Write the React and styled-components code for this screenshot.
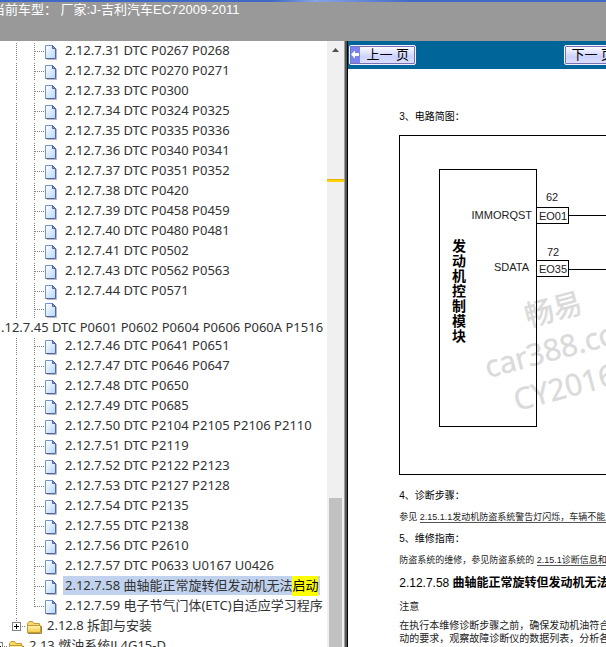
import styled, { createGlobalStyle } from "styled-components";

const GlobalStyle = createGlobalStyle`
  * {
    box-sizing: border-box;
  }

  body {
    margin: 0;
    overflow: hidden;
    background-color: white;
  }
`;

const Page = styled.div`
  display: flex;
  flex-direction: column;
  height: 100vh;
`;

const Header = styled.header`
  flex-shrink: 0;
  height: 41px;
  border-top: 2px solid #4169c8;
  border-image: linear-gradient(to right, #3f69c6 45%, #86a4e6 52%, #4169c8 68%) 1;
  background-color: #999;
  overflow: hidden;
`;

const HeaderText = styled.div`
  margin-left: -8px;
  color: white;
  font-family: "Liberation Sans", "Noto Sans CJK SC", sans-serif;
  font-size: 13px;
  line-height: 16px;
  white-space: pre;
`;

const Main = styled.main`
  display: flex;
  flex: 1;
  min-height: 0;
`;

const TreePane = styled.nav`
  width: 54%;
  flex-shrink: 0;
  overflow: hidden;
`;

const Tree = styled.ul`
  margin: 0;
  padding: 0;
  list-style: none;
  font-family: "Noto Sans", "Noto Sans CJK SC", sans-serif;
  font-size: 13px;
  line-height: 18px;
  color: #333;
  white-space: nowrap;
`;

const Row = styled.li`
  display: flex;
  height: ${(props) => (props.$wrapped ? "18px" : "20px")};
  padding-left: ${(props) => (props.$level ? "8px" : "0")};
  margin-left: ${(props) => (props.$level ? "0" : "-10px")};

  svg {
    flex-shrink: 0;
    align-self: flex-end;
  }
`;

const WrappedRow = styled.li`
  height: 17px;
  margin-left: -2px;
  line-height: 17px;
`;

const TreeLink = styled.a`
  height: 19px;
  margin-left: 1px;
  padding: 0 2px;
  color: inherit;
  text-decoration: none;
  background-color: ${(props) => (props.$selected ? "#c1d2ee" : "transparent")};
`;

const Mark = styled.mark`
  display: inline-block;
  height: 20px;
  background-color: #ff0;
  color: black;
`;

const Toggle = styled.button`
  display: flex;
  align-items: flex-end;
  padding: 0;
  border: none;
  background: none;
  cursor: pointer;
`;

const ScrollTrack = styled.div`
  display: flex;
  flex-direction: column;
  flex-shrink: 0;
  width: 17px;
  background-color: #f0f0f0;
`;

const ScrollArrow = styled.button`
  display: flex;
  justify-content: center;
  align-items: center;
  height: 17px;
  padding: 0;
  border: none;
  background: none;
`;

const FoundLine = styled.div`
  height: 3px;
  margin-top: 121px;
  background-color: #ffd400;
  border-top: 1px solid #e0b400;
`;

const Thumb = styled.div`
  flex: 1;
  margin: 316px 2px 0;
  background-color: #c1c1c1;
`;

const Splitter = styled.div`
  flex-shrink: 0;
  width: 4px;
  background: linear-gradient(to right, #a0a0a0 1px, #555 1px, #555 3px, black 3px);
`;

const DocPane = styled.section`
  flex: 1;
  min-width: 0;
  overflow: hidden;
  font-family: "Liberation Sans", "Noto Sans CJK SC", sans-serif;
  color: #222;
  white-space: nowrap;
`;

const Toolbar = styled.div`
  display: flex;
  align-items: center;
  gap: 148px;
  height: 28px;
  padding: 0 1px;
  background-color: #069;
`;

const PageButton = styled.button`
  display: flex;
  flex-shrink: 0;
  align-items: stretch;
  width: 67px;
  height: 20px;
  padding: 0;
  border: 1px solid #f4f4ff;
  outline: 1px solid #7a70b8;
  outline-offset: -2px;
  border-radius: 2px;
  background: linear-gradient(#fff, #ccd2ff 60%, #dfe2ff);
  color: black;
  font-family: "Liberation Sans", "Noto Sans CJK SC", sans-serif;
  font-size: 13px;
  line-height: 18px;
  white-space: pre;
  cursor: pointer;
`;

const ButtonLabel = styled.span`
  flex: 1;
  text-align: center;
`;

const Doc = styled.article`
  padding: 41px 0 0 51px;
`;

const SectionTitle = styled.p`
  margin: 0;
  font-size: 10px;
  line-height: 14px;
  color: black;
`;

const Diagram = styled.svg`
  display: block;
  margin: 11px 0 14px;
`;

const Paragraph = styled.p`
  margin: 8px 0 9px;
  font-size: 9px;
  line-height: 12px;
`;

const DocLink = styled.a`
  color: inherit;
  text-decoration: none;
  border-bottom: 1px solid #555;
`;

const DocHeading = styled.h2`
  margin: 0 0 9px;
  font-size: 12px;
  line-height: 16px;
  font-weight: bold;
  color: black;

  span {
    font-weight: normal;
  }
`;

const Note = styled.p`
  margin: 0 0 6px;
  font-size: 10px;
  line-height: 13px;
`;

const items = [
  "2.12.7.31 DTC P0267 P0268",
  "2.12.7.32 DTC P0270 P0271",
  "2.12.7.33 DTC P0300",
  "2.12.7.34 DTC P0324 P0325",
  "2.12.7.35 DTC P0335 P0336",
  "2.12.7.36 DTC P0340 P0341",
  "2.12.7.37 DTC P0351 P0352",
  "2.12.7.38 DTC P0420",
  "2.12.7.39 DTC P0458 P0459",
  "2.12.7.40 DTC P0480 P0481",
  "2.12.7.41 DTC P0502",
  "2.12.7.43 DTC P0562 P0563",
  "2.12.7.44 DTC P0571",
];

const itemsAfterWrap = [
  "2.12.7.46 DTC P0641 P0651",
  "2.12.7.47 DTC P0646 P0647",
  "2.12.7.48 DTC P0650",
  "2.12.7.49 DTC P0685",
  "2.12.7.50 DTC P2104 P2105 P2106 P2110",
  "2.12.7.51 DTC P2119",
  "2.12.7.52 DTC P2122 P2123",
  "2.12.7.53 DTC P2127 P2128",
  "2.12.7.54 DTC P2135",
  "2.12.7.55 DTC P2138",
  "2.12.7.56 DTC P2610",
  "2.12.7.57 DTC P0633 U0167 U0426",
];

const dots = { stroke: "#808080", strokeDasharray: "1 1" };

const Branch = ({ last }) => (
  <svg width="36" height="18" aria-hidden="true" shapeRendering="crispEdges">
    <path d="M8.5 0V18" {...dots} />
    <path d={last ? "M26.5 0V9" : "M26.5 0V18"} {...dots} />
    <path d="M27 8.5H36" {...dots} />
  </svg>
);

const PageIcon = () => (
  <svg width="18" height="18" aria-hidden="true">
    <defs>
      <linearGradient id="paper" x1="0" y1="0" x2="1" y2="1">
        <stop offset="0" stopColor="#ffffff" />
        <stop offset="1" stopColor="#b4d6fa" />
      </linearGradient>
    </defs>
    <path d="M3 16.5H12.5V6" fill="none" stroke="#b8b8c0" />
    <path d="M1.5 2.5H8.5L11.5 5.5V15.5H1.5Z" fill="url(#paper)" />
    <path d="M1.5 15.5V2.5H8.5" fill="none" stroke="#7294d8" />
    <path d="M8.5 2.5L11.5 5.5V15.5H1.5" fill="none" stroke="#55639f" />
    <path d="M8.5 2.5V5.5H11.5Z" fill="#7fa8ea" stroke="#55639f" />
  </svg>
);

const PlusIcon = () => (
  <svg width="18" height="18" aria-hidden="true" shapeRendering="crispEdges">
    <path d="M8.5 0V4M14 8.5H18" {...dots} />
    <rect x="4.5" y="4.5" width="8" height="8" fill="white" stroke="#808080" />
    <path d="M6 8.5H11M8.5 6V11" stroke="black" />
  </svg>
);

const FolderIcon = () => (
  <svg width="18" height="18" aria-hidden="true">
    <defs>
      <linearGradient id="folder" x1="0" y1="0" x2="0" y2="1">
        <stop offset="0" stopColor="#fff6b4" />
        <stop offset="1" stopColor="#f5c93c" />
      </linearGradient>
    </defs>
    <path d="M1.5 14.5V5.5L3 3.5H6.5L8 5.5H13.5V14.5Z" fill="#f7d868" stroke="#c49a32" />
    <path d="M1.5 14.5V7.5H14.5V14.5Z" fill="url(#folder)" stroke="#c49a32" />
    <path d="M2 15.5H15.5V8" fill="none" stroke="#9c8444" />
  </svg>
);

const TreeItem = ({ label }) => (
  <Row $level={1}>
    <Branch />
    <PageIcon />
    <TreeLink href="#">{label}</TreeLink>
  </Row>
);

const FolderItem = ({ label, level }) => (
  <Row $level={level}>
    <Toggle aria-label={label}>
      <PlusIcon />
    </Toggle>
    <FolderIcon />
    <TreeLink href="#">{label}</TreeLink>
  </Row>
);

const CircuitDiagram = () => (
  <Diagram width="480" height="340" role="img" aria-label="电路简图">
    <g
      fill="#dadada"
      stroke="#dadada"
      strokeWidth="0.5"
      fontFamily='"Open Sans", "Noto Sans CJK SC", sans-serif'
      fontSize="30"
    >
      <text transform="translate(129 192) rotate(-15)" fontSize="29">畅易</text>
      <text transform="translate(89 243) rotate(-15)">car388.com</text>
      <text transform="translate(118 276) rotate(-15)">CY2016</text>
    </g>
    <g fill="none" stroke="black" shapeRendering="crispEdges">
      <rect x="0.5" y="0.5" width="479" height="339" />
      <rect x="40.5" y="34.5" width="97" height="257" />
      <rect x="137.5" y="72.5" width="32" height="16" />
      <rect x="137.5" y="125.5" width="32" height="16" />
      <path d="M170 80.5H480M170 134.5H480" />
    </g>
    <g fontSize="11" fill="#222">
      <text x="133" y="84" textAnchor="end">IMMORQST</text>
      <text x="130" y="136" textAnchor="end">SDATA</text>
      <text x="153" y="66" textAnchor="middle">62</text>
      <text x="154" y="121" textAnchor="middle">72</text>
      <text x="154" y="85" textAnchor="middle">EO01</text>
      <text x="154" y="138" textAnchor="middle">EO35</text>
    </g>
    <g fontSize="14" fontWeight="bold" textAnchor="middle">
      {[..."发动机控制模块"].map((char, i) => (
        <text key={char} x="60" y={116 + i * 15}>
          {char}
        </text>
      ))}
    </g>
  </Diagram>
);

const App = () => {
  return (
    <Page>
      <GlobalStyle />
      <Header>
        <HeaderText>当前车型： 厂家:J-吉利汽车EC72009-2011</HeaderText>
      </Header>
      <Main>
        <TreePane>
          <Tree>
            {items.map((label) => (
              <TreeItem key={label} label={label} />
            ))}
            <Row $level={1} $wrapped>
              <Branch />
              <PageIcon />
            </Row>
            <WrappedRow>
              <TreeLink href="#">
                .12.7.45 DTC P0601 P0602 P0604 P0606 P060A P1516
              </TreeLink>
            </WrappedRow>
            {itemsAfterWrap.map((label) => (
              <TreeItem key={label} label={label} />
            ))}
            <Row $level={1}>
              <Branch />
              <PageIcon />
              <TreeLink href="#" $selected>
                2.12.7.58 曲轴能正常旋转但发动机无法<Mark>启动</Mark>
              </TreeLink>
            </Row>
            <Row $level={1}>
              <Branch last />
              <PageIcon />
              <TreeLink href="#">2.12.7.59 电子节气门体(ETC)自适应学习程序</TreeLink>
            </Row>
            <FolderItem level={1} label="2.12.8 拆卸与安装" />
            <FolderItem level={0} label="2.13 燃油系统JL4G15-D" />
          </Tree>
        </TreePane>
        <ScrollTrack>
          <ScrollArrow aria-label="向上滚动">
            <svg width="7" height="4">
              <path d="M3.5 0L7 4H0Z" fill="#505050" />
            </svg>
          </ScrollArrow>
          <FoundLine />
          <Thumb />
        </ScrollTrack>
        <Splitter />
        <DocPane>
          <Toolbar>
            <PageButton>
              <svg width="10" height="18" aria-hidden="true">
                <rect width="10" height="18" fill="#7b83ee" />
                <path d="M1 8.5L5 4.5V7H9V10H5V12.5Z" fill="white" />
              </svg>
              <ButtonLabel>上一 页</ButtonLabel>
            </PageButton>
            <PageButton>
              <ButtonLabel>下一 页</ButtonLabel>
              <svg width="10" height="18" aria-hidden="true">
                <rect width="10" height="18" fill="#7b83ee" />
                <path d="M9 8.5L5 4.5V7H1V10H5V12.5Z" fill="white" />
              </svg>
            </PageButton>
          </Toolbar>
          <Doc>
            <SectionTitle>3、电路简图：</SectionTitle>
            <CircuitDiagram />
            <SectionTitle>4、诊断步骤：</SectionTitle>
            <Paragraph>
              参见 <DocLink href="#">2.15.1.1发动机防盗系统警告灯闪烁，车辆不能启动</DocLink>
            </Paragraph>
            <SectionTitle>5、维修指南：</SectionTitle>
            <Paragraph>
              防盗系统的维修，参见防盗系统的 <DocLink href="#">2.15.1诊断信息和步骤</DocLink>
            </Paragraph>
            <DocHeading>
              <span>2.12.7.58</span> 曲轴能正常旋转但发动机无法启动
            </DocHeading>
            <Note>注意</Note>
            <Note>
              在执行本维修诊断步骤之前，确保发动机油符合启
              <br />
              动的要求，观察故障诊断仪的数据列表，分析各项
            </Note>
          </Doc>
        </DocPane>
      </Main>
    </Page>
  );
};

export default App;
